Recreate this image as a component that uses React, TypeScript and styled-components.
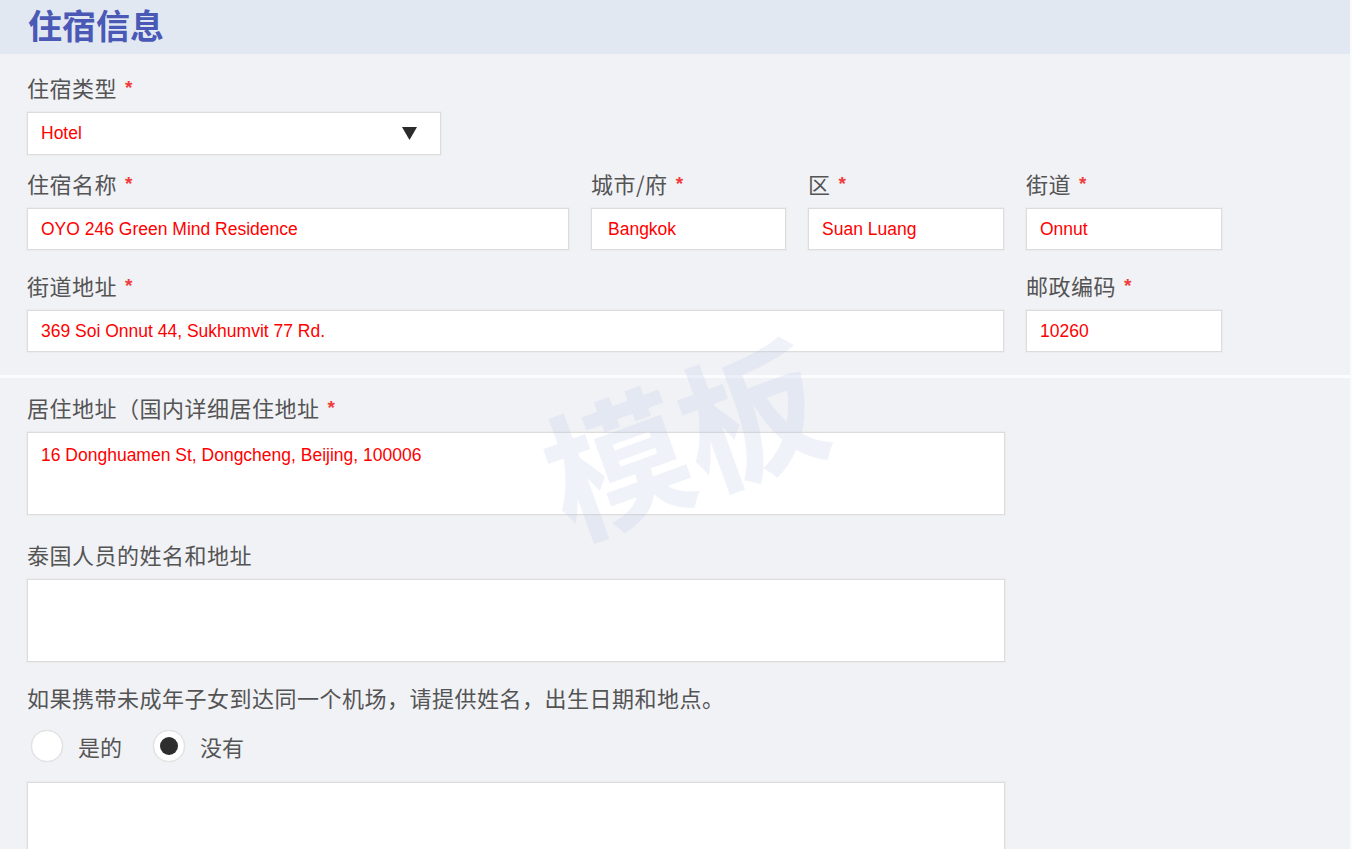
import React, { useState } from "react"
import styled, { createGlobalStyle } from "styled-components"

const GlobalStyle = createGlobalStyle`
  html, body {
    margin: 0;
    padding: 0;
    overflow: hidden;
    background: #f1f2f6;
  }
  * {
    box-sizing: border-box;
  }
`

const cjk = `"Noto Sans CJK SC", "Noto Sans", sans-serif`
const latin = `"Liberation Sans", Arial, "Noto Sans CJK SC", sans-serif`

const App = () => {
  const [withChildren, setWithChildren] = useState<boolean>(false)

  return (
    <Page>
      <GlobalStyle />
      <Header>
        <HeaderTitle>住宿信息</HeaderTitle>
      </Header>

      <Section>
        <Field $mb={13}>
          <Label>
            住宿类型<Star>*</Star>
          </Label>
          <Select>
            <span>Hotel</span>
            <svg width="15" height="13" viewBox="0 0 15 13">
              <polygon points="0,0 15,0 7.5,13" fill="#2b2b2b" />
            </svg>
          </Select>
        </Field>

        <Grid>
          <Field>
            <Label>
              住宿名称<Star>*</Star>
            </Label>
            <Input>OYO 246 Green Mind Residence</Input>
          </Field>
          <Field>
            <Label>
              城市/府<Star>*</Star>
            </Label>
            <Input $pl={16}>Bangkok</Input>
          </Field>
          <Field>
            <Label>
              区<Star>*</Star>
            </Label>
            <Input>Suan Luang</Input>
          </Field>
          <Field>
            <Label>
              街道<Star>*</Star>
            </Label>
            <Input>Onnut</Input>
          </Field>
          <Field $span={3}>
            <Label>
              街道地址<Star>*</Star>
            </Label>
            <Input>369 Soi Onnut 44, Sukhumvit 77 Rd.</Input>
          </Field>
          <Field>
            <Label>
              邮政编码<Star>*</Star>
            </Label>
            <Input>10260</Input>
          </Field>
        </Grid>
      </Section>

      <Section $last>
        <Field $mb={24}>
          <Label>
            居住地址（国内详细居住地址<Star>*</Star>
          </Label>
          <TextArea>16 Donghuamen St, Dongcheng, Beijing, 100006</TextArea>
        </Field>
        <Field $mb={20}>
          <Label>泰国人员的姓名和地址</Label>
          <TextArea />
        </Field>
        <Label>如果携带未成年子女到达同一个机场，请提供姓名，出生日期和地点。</Label>
        <RadioRow>
          <RadioOption onClick={() => setWithChildren(true)}>
            <RadioCircle $checked={withChildren} />
            <RadioText>是的</RadioText>
          </RadioOption>
          <RadioOption onClick={() => setWithChildren(false)}>
            <RadioCircle $checked={!withChildren} />
            <RadioText>没有</RadioText>
          </RadioOption>
        </RadioRow>
        <TextArea />
      </Section>

      <Watermark>模板</Watermark>
    </Page>
  )
}

const Page = styled.div`
  position: relative;
  min-height: 849px;
  background: #f1f2f6;
  border-right: 2px solid #fbfbfd;
  font-family: ${cjk};
`

const Header = styled.div`
  height: 54px;
  display: flex;
  align-items: center;
  padding-left: 28px;
  background: #e2e8f2;
`

const HeaderTitle = styled.h1`
  margin: 0;
  font-family: ${cjk};
  font-size: 34px;
  font-weight: 700;
  line-height: 1;
  color: #4a58b6;
  position: relative;
  top: -2px;
`

const Section = styled.div<{ $last?: boolean }>`
  padding: ${(p) => (p.$last ? "14px 0 0 27px" : "18px 0 23px 27px")};
  border-bottom: ${(p) => (p.$last ? "none" : "3px solid #fbfcfd")};
`

const Field = styled.div<{ $mb?: number; $span?: number }>`
  display: flex;
  flex-direction: column;
  margin-bottom: ${(p) => p.$mb ?? 0}px;
  grid-column: ${(p) => (p.$span ? `span ${p.$span}` : "auto")};
`

const Label = styled.div`
  height: 30px;
  line-height: 30px;
  margin-bottom: 10px;
  font-family: ${cjk};
  font-size: 22px;
  letter-spacing: 0.5px;
  color: #545454;
  white-space: nowrap;
`

const Star = styled.span`
  display: inline-block;
  margin-left: 8px;
  font-family: ${latin};
  font-size: 19px;
  font-weight: 700;
  line-height: 1;
  color: #f03c3c;
  vertical-align: 3px;
`

const Grid = styled.div`
  display: grid;
  grid-template-columns: 542px 195px 196px 196px;
  column-gap: 22px;
  row-gap: 20px;
`

const boxStyles = `
  background: #ffffff;
  border: 1px solid #dcdcdc;
  box-shadow: 0 0 0 1px #ececec;
  font-family: ${latin};
  font-size: 17.5px;
  color: #ff0000;
`

const Select = styled.div`
  ${boxStyles}
  width: 414px;
  height: 43px;
  display: flex;
  align-items: center;
  justify-content: space-between;
  padding: 0 23px 0 13px;
`

const Input = styled.div<{ $pl?: number }>`
  ${boxStyles}
  height: 42px;
  display: flex;
  align-items: center;
  padding-left: ${(p) => p.$pl ?? 13}px;
  white-space: nowrap;
  overflow: hidden;
`

const TextArea = styled.div`
  ${boxStyles}
  width: 978px;
  height: 83px;
  padding: 12px 13px;
  line-height: 20px;
`

const RadioRow = styled.div`
  display: flex;
  align-items: center;
  height: 32px;
  margin: 18px 0 20px 4px;
  gap: 31px;
`

const RadioOption = styled.label`
  display: flex;
  align-items: center;
  cursor: pointer;
`

const RadioCircle = styled.span<{ $checked: boolean }>`
  width: 32px;
  height: 32px;
  border-radius: 50%;
  background: #ffffff;
  border: 1px solid #e2e2e2;
  box-shadow: 0 0 1px rgba(0, 0, 0, 0.12);
  display: flex;
  align-items: center;
  justify-content: center;

  &::after {
    content: "";
    display: ${(p) => (p.$checked ? "block" : "none")};
    width: 18px;
    height: 18px;
    border-radius: 50%;
    background: #2e2e2e;
  }
`

const RadioText = styled.span`
  margin-left: 15px;
  font-family: ${cjk};
  font-size: 22px;
  line-height: 32px;
  color: #545454;
`

const Watermark = styled.div`
  position: absolute;
  left: 540px;
  top: 362px;
  font-family: ${cjk};
  font-size: 142px;
  font-weight: 700;
  line-height: 1;
  color: rgba(180, 198, 228, 0.22);
  transform: rotate(-20deg);
  pointer-events: none;
  white-space: nowrap;
`

export default App
